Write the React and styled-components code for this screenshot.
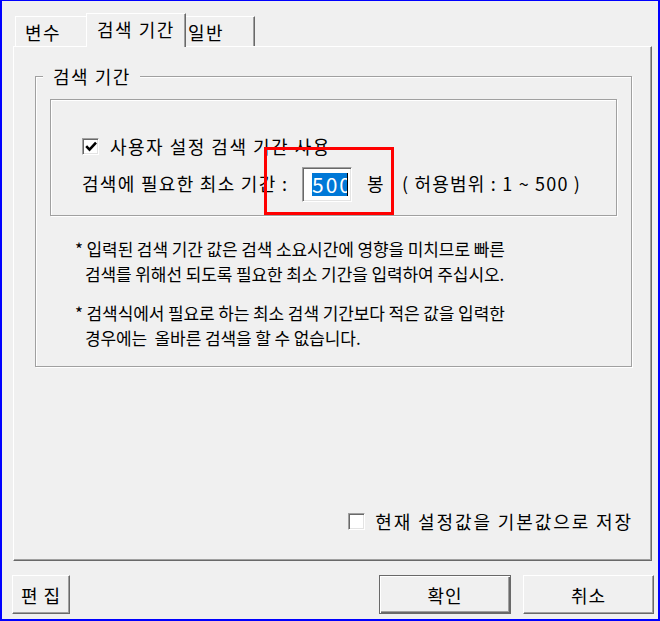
import React from "react";
import styled, { createGlobalStyle } from "styled-components";

const Global = createGlobalStyle`
  html, body { margin: 0; padding: 0; background: #f0f0f0; }
  body {
    font-family: "Noto Sans CJK KR", "Malgun Gothic", sans-serif;
    font-size: 18px;
    color: #000;
  }
  *, *::before, *::after { box-sizing: border-box; }
`;

const Window = styled.div`
  position: relative;
  width: 660px;
  height: 621px;
  border: 2px solid #0000ff;
  border-top-width: 1px;
  padding: 12px 4px 0 10px;
  display: flex;
  flex-direction: column;
  background: #f0f0f0;
  font-size: 18px;
`;

const TabRow = styled.div`
  display: flex;
  align-items: flex-end;
  height: 33px;
  padding-left: 3px;
`;

const Tab = styled.div`
  position: relative;
  z-index: ${(p) => (p.$active ? 2 : 1)};
  flex: none;
  width: ${(p) => p.$w}px;
  height: ${(p) => (p.$active ? 34 : 30)}px;
  margin: 0 ${(p) => (p.$active ? -2 : 0)}px ${(p) => (p.$active ? -1 : 0)}px
    ${(p) => (p.$active ? -2 : 0)}px;
  padding: 0 0 ${(p) => (p.$active ? 4 : 0)}px ${(p) => p.$pl}px;
  background: #f0f0f0;
  border-top: 1px solid #fff;
  border-left: 1px solid #fff;
  border-right: 1px solid #696969;
  box-shadow: inset -1px 0 0 #a0a0a0;
  display: flex;
  align-items: center;
  line-height: 20px;
  white-space: nowrap;
  letter-spacing: 1.5px;
`;

const Panel = styled.div`
  height: 515px;
  margin: 0 2px 0 1px;
  border: 1px solid #fff;
  border-right-color: #696969;
  border-bottom-color: #696969;
  box-shadow: inset -1px -1px 0 #a0a0a0;
  padding: 29px 19px 29px 21px;
  display: flex;
  flex-direction: column;
`;

const GroupBox = styled.div`
  border: 1px solid #a0a0a0;
  box-shadow: 1px 1px 0 #fff, inset 1px 1px 0 #fff;
  padding: 0 14px 16px;
`;

const Caption = styled.div`
  width: fit-content;
  height: 20px;
  line-height: 20px;
  margin: -11px 0 0 -7px;
  padding: 0 9px 0 10px;
  background: #f0f0f0;
  letter-spacing: 1.5px;
`;

const EtchedBox = styled.div`
  margin-top: 13px;
  height: 117px;
  border: 1px solid #a0a0a0;
  box-shadow: 1px 1px 0 #fff, inset 1px 1px 0 #fff;
  padding: 36px 0 0 31px;
`;

const CheckRow = styled.label`
  display: flex;
  align-items: center;
  gap: ${(p) => p.$gap}px;
  height: 20px;
  line-height: 20px;
  white-space: nowrap;
  letter-spacing: ${(p) => p.$ls}px;
`;

const CheckBox = styled.span`
  flex: none;
  width: 17px;
  height: 17px;
  background: #fff;
  border: 1px solid;
  border-color: #a0a0a0 #fff #fff #a0a0a0;
  box-shadow: inset 1px 1px 0 #696969, inset -1px -1px 0 #e3e3e3;
  display: flex;
  align-items: center;
  justify-content: center;
`;

const FieldRow = styled.div`
  display: flex;
  align-items: center;
  height: 35px;
  margin-top: 11px;
  white-space: nowrap;
  letter-spacing: 1.3px;
`;

const FieldLabel = styled.span`
  flex: none;
  width: 220px;
  margin-top: -4px;
`;

const NumBox = styled.div`
  flex: none;
  width: 50px;
  height: 35px;
  background: #fff;
  border: 1px solid;
  border-color: #a0a0a0 #fff #fff #a0a0a0;
  box-shadow: inset 1px 1px 0 #696969, inset -1px -1px 0 #e3e3e3;
  padding-left: 9px;
  display: flex;
  align-items: center;
  overflow: hidden;
`;

const Selected = styled.span`
  display: block;
  width: 36px;
  height: 23px;
  line-height: 23px;
  overflow: hidden;
  white-space: nowrap;
  background: #0078d7;
  color: #fff;
  font-size: 21px;
  letter-spacing: 2px;
  border-right: 1px solid #000;
`;

const Unit = styled.span`
  flex: none;
  width: 35px;
  margin: -4px 0 0 15px;
`;

const Range = styled.span`
  margin-top: -4px;
  letter-spacing: 1.2px;
`;

const Notes = styled.div`
  margin: 20px 0 0 25px;
  font-size: 17px;
  line-height: 25px;
  letter-spacing: -0.1px;
  white-space: pre;
`;

const Note = styled.p`
  margin: 0;
  padding-left: 10px;
  text-indent: -10px;
  & + & {
    margin-top: 14px;
  }
`;

const Footer = styled.div`
  margin-top: auto;
  align-self: flex-end;
  margin-right: -1px;
`;

const ButtonRow = styled.div`
  display: flex;
  margin-top: 14px;
  gap: 12px;
`;

const Button = styled.button`
  flex: none;
  width: ${(p) => p.$w}px;
  height: 39px;
  margin-right: ${(p) => (p.$push ? "auto" : "0")};
  padding: 0;
  font: inherit;
  font-size: 18px;
  letter-spacing: 1px;
  color: #000;
  background: #f0f0f0;
  border: 1px solid;
  border-color: ${(p) =>
    p.$default ? "#696969" : "#fff #696969 #696969 #fff"};
  box-shadow: ${(p) =>
    p.$default
      ? "inset 1px 1px 0 #fff, inset -1px -1px 0 #696969, inset -2px -2px 0 #a0a0a0"
      : "inset -1px -1px 0 #a0a0a0"};
`;

const Annotation = styled.div`
  position: absolute;
  left: 262px;
  top: 146px;
  width: 130px;
  height: 68px;
  border: 3px solid #ff0000;
  pointer-events: none;
`;

const Check = () => (
  <svg width="12" height="11" viewBox="0 0 12 11">
    <polyline
      points="1.2,5.2 4.5,8.6 11,1.6"
      fill="none"
      stroke="#000"
      strokeWidth="2.6"
    />
  </svg>
);

export default function App() {
  return (
    <>
      <Global />
      <Window>
        <TabRow>
          <Tab $w={73} $pl={9}>변수</Tab>
          <Tab $w={100} $pl={10} $active>
            검색 기간
          </Tab>
          <Tab $w={71} $pl={3}>일반</Tab>
        </TabRow>
        <Panel>
          <GroupBox>
            <Caption>검색 기간</Caption>
            <EtchedBox>
              <CheckRow $gap={11} $ls={1.5}>
                <CheckBox>
                  <Check />
                </CheckBox>
                사용자 설정 검색 기간 사용
              </CheckRow>
              <FieldRow>
                <FieldLabel>검색에 필요한 최소 기간 :</FieldLabel>
                <NumBox>
                  <Selected>500</Selected>
                </NumBox>
                <Unit>봉</Unit>
                <Range>( 허용범위 : 1 ~ 500 )</Range>
              </FieldRow>
            </EtchedBox>
            <Notes>
              <Note>
                {"* 입력된 검색 기간 값은 검색 소요시간에 영향을 미치므로 빠른\n검색를 위해선 되도록 필요한 최소 기간을 입력하여 주십시오."}
              </Note>
              <Note>
                {"* 검색식에서 필요로 하는 최소 검색 기간보다 적은 값을 입력한\n경우에는  올바른 검색을 할 수 없습니다."}
              </Note>
            </Notes>
          </GroupBox>
          <Footer>
            <CheckRow $gap={10} $ls={1.9}>
              <CheckBox />
              현재 설정값을 기본값으로 저장
            </CheckRow>
          </Footer>
        </Panel>
        <ButtonRow>
          <Button $w={58} $push>
            편 집
          </Button>
          <Button $w={132} $default>
            확인
          </Button>
          <Button $w={131}>취소</Button>
        </ButtonRow>
        <Annotation />
      </Window>
    </>
  );
}
